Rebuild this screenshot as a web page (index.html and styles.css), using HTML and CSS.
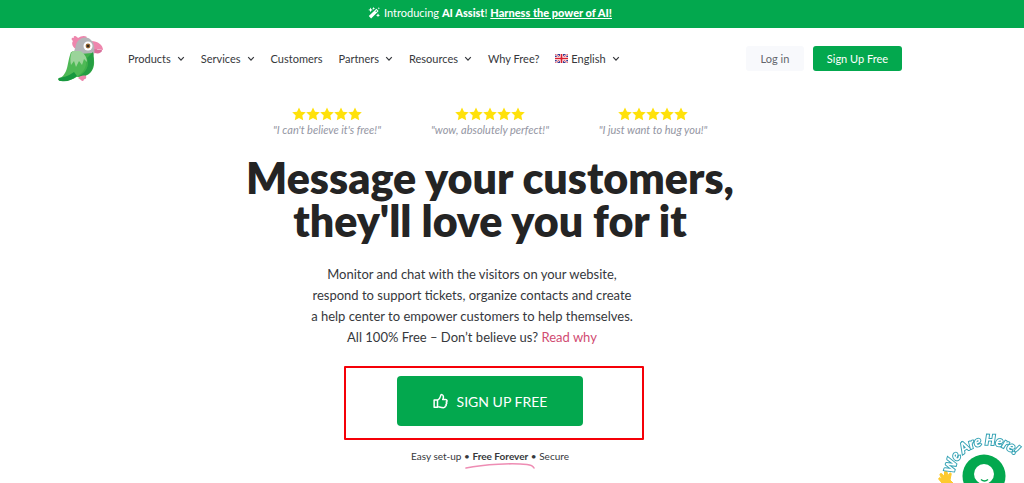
FILE: index.html
```html
<!DOCTYPE html>
<html lang="en">
<head>
<meta charset="utf-8">
<meta name="viewport" content="width=device-width, initial-scale=1">
<title>Message your customers</title>
<link rel="stylesheet" href="styles.css">
</head>
<body>
<svg class="defs" aria-hidden="true">
  <symbol id="star" viewBox="0 0 14 14"><path d="M7 .4l2 4.300 4.800.6-3.500 3.200.9 4.800L7 11l-4.200 2.300.9-4.800L.2 5.300 5 4.700z"/></symbol>
  <symbol id="chevron" viewBox="0 0 8 6"><path d="M1.200 1.200L4 4.200l2.800-3" fill="none" stroke="currentColor" stroke-width="1.200"/></symbol>
</svg>

<div class="promo">
  <svg class="promo-icon" viewBox="0 0 12 12" aria-hidden="true"><path d="M.8 9L8.400 1.800l2.200 2.300L3.100 11.400z"/><path d="M7.300 4.300l1.200-1.100.8.900-1.200 1z" fill="#03a84e"/><path d="M2.600.5l.7 1.700 1.700.7-1.700.7-.7 1.700-.7-1.700L.2 2.900l1.700-.7zM5.600 0l.5.9.9.5-.9.5-.5.900-.5-.9-.9-.5.9-.5zM10 6.300l.6 1.400 1.400.6-1.400.6-.6 1.400-.6-1.400-1.400-.6 1.400-.6zM10.900 0l.3.900.8.300-.8.400-.3.900-.4-.9-.9-.4.900-.3z"/></svg>
  <p>Introducing <b>AI Assist</b>! <a href="#ai">Harness the power of AI!</a></p>
</div>

<header class="header">
  <a class="logo" href="#home" aria-label="Home">
    <svg viewBox="0 0 46 48" aria-hidden="true">
      <path d="M20 3c-3-3-5-2-4 0-3-1-3 2-1 3-2 2 0 7 3 8l7-6 4-6c-3-2-6-1-9 1z" fill="#ee86ad"/>
      <path d="M33 6c7 0 12 4 12 9l-6-1c1 3-1 5-4 4l-3-4z" fill="#ee86ad"/>
      <path d="M35 14l9 1c0 3-4 4-7 3z" fill="#d96f9b"/>
      <path d="M18 10c2-7 10-10 15-5 3 3 4 8 3 14 0 4-8 5-13 4-6 0-10-2-10-3 3-2 4-6 5-10z" fill="#b3b5b7"/>
      <path d="M13 17c4 1 6-1 9 2l12-1c3 7 3 14-1 19-4 5-12 6-19 4z" fill="#3fb04b"/>
      <path d="M29 23c3 8-1 14-8 18 7 1 13-3 14-10 1-5 1-9 0-14z" fill="#259e43"/>
      <path d="M13 17c-3 8-3 15-5 19-2 4-4 7-7 7-2 1 0 3 2 3 9 0 13-2 18-6 6-4 8-10 7-17l-8-5z" fill="#4eb955"/>
      <path d="M1 43c7-1 11-3 15-6l3 4c-5 4-10 6-16 5-3 0-3-2-2-3z" fill="#18983f"/>
      <path d="M14 16c-2 5-2 10-1 14l3-4 2 6 3-6 3 4 2-6 3 3c0-5-3-9-7-11z" fill="#9bd49a"/>
      <circle cx="30" cy="11" r="4.500" fill="#fff"/><circle cx="30" cy="11" r="2.400" fill="#9b6a32"/><circle cx="30" cy="11" r="1.300" fill="#302a22"/>
      <path d="M20 43c2-2 5-3 8-2 1 2-1 4-2 3 0 2-2 3-3 1z" fill="#ee86ad"/>
    </svg>
  </a>
  <nav class="nav">
    <a href="#products">Products <svg class="chevron"><use href="#chevron"/></svg></a>
    <a href="#services">Services <svg class="chevron"><use href="#chevron"/></svg></a>
    <a href="#customers">Customers</a>
    <a href="#partners">Partners <svg class="chevron"><use href="#chevron"/></svg></a>
    <a href="#resources">Resources <svg class="chevron"><use href="#chevron"/></svg></a>
    <a href="#why">Why Free?</a>
    <a href="#language"><svg class="flag" viewBox="0 0 13 9" aria-hidden="true"><path d="M0 0h13v9H0z" fill="#343b93"/><path d="M0 0l13 9M13 0L0 9" stroke="#fff" stroke-width="2"/><path d="M0 0l13 9M13 0L0 9" stroke="#d93347" stroke-width=".8"/><path d="M6.500 0v9M0 4.500h13" stroke="#fff" stroke-width="3"/><path d="M6.500 0v9M0 4.500h13" stroke="#d9202f" stroke-width="1.700"/></svg>English <svg class="chevron"><use href="#chevron"/></svg></a>
  </nav>
  <div class="account">
    <button class="login" type="button">Log in</button>
    <button class="signup" type="button">Sign Up Free</button>
  </div>
</header>

<main class="hero">
  <div class="reviews">
    <figure class="review"><div class="stars"><svg><use href="#star"/></svg><svg><use href="#star"/></svg><svg><use href="#star"/></svg><svg><use href="#star"/></svg><svg><use href="#star"/></svg></div><figcaption>"I can't believe it's free!"</figcaption></figure>
    <figure class="review"><div class="stars"><svg><use href="#star"/></svg><svg><use href="#star"/></svg><svg><use href="#star"/></svg><svg><use href="#star"/></svg><svg><use href="#star"/></svg></div><figcaption>"wow, absolutely perfect!"</figcaption></figure>
    <figure class="review"><div class="stars"><svg><use href="#star"/></svg><svg><use href="#star"/></svg><svg><use href="#star"/></svg><svg><use href="#star"/></svg><svg><use href="#star"/></svg></div><figcaption>"I just want to hug you!"</figcaption></figure>
  </div>
  <h1>Message your customers,<br>they'll love you for it</h1>
  <p class="intro">Monitor and chat with the visitors on your website,<br>respond to support tickets, organize contacts and create<br>a help center to empower customers to help themselves.<br>All 100% Free – Don’t believe us? <a href="#read">Read why</a></p>
  <div class="cta">
    <button class="cta-button" type="button"><svg viewBox="0 0 16 16" aria-hidden="true"><path d="M1.200 7h3.600v7.600H1.200zM4.800 7.300C6.700 6.500 7.600 4.500 8 2.800 8.200 1.600 8.800 1 9.600 1.200c2 .5 1.700 3.300.8 5.300h3c2 0 2 2.200.7 2.600 1 .7.800 2-.3 2.400.6.900.2 1.800-.7 2.100 0 1.100-.7 1.500-2 1.500-2.800 0-4-.7-6.300-1.100" fill="none" stroke="currentColor" stroke-width="1.600" stroke-linejoin="round"/></svg>SIGN UP FREE</button>
  </div>
  <p class="perks">Easy set-up • <b>Free Forever</b> • Secure
    <svg class="swoosh" viewBox="0 0 70 8" aria-hidden="true"><path d="M1 6C20 2 48 1 62 2.500C66 3 68 4 69 6" fill="none" stroke="#ee8db4" stroke-width="1.600" stroke-linecap="round"/></svg>
  </p>
</main>

<button class="chat" type="button" aria-label="Open chat">
  <svg viewBox="0 0 86 52">
    <defs><path id="arc" d="M16 43C18 24 33 14 51 14C64 14 74 20 86 33"/></defs>
    <circle cx="46" cy="45" r="21.500" fill="#03a84e"/>
    <circle cx="46" cy="43" r="10" fill="#fff"/>
    <path d="M43 48.500q3.500 3 7 0" fill="none" stroke="#03a84e" stroke-width="1.500"/>
    <path d="M4 52L1 48.500c-1-2 1-2 2-1l1 .5-2-4c-.5-2 2-2 3 0l1.500 2V41c.5-2 2.500-1 2.500 0l1 4 1-2c1-2 3-1 2 1l-1 5 3 3z" fill="#fdca2e" stroke="#fdca2e"/>
    <text class="chat-label"><textPath href="#arc">We Are Here!</textPath></text>
  </svg>
</button>
</body>
</html>
```
FILE: styles.css
```css
*, *::after { box-sizing: border-box; }
body {
  margin: 0;
  min-height: 100vh;
  background: #fff;
  color: #36383c;
  font-family: Lato, "Liberation Sans", sans-serif;
  font-size: 11px;
}
p, h1, figure { margin: 0; }
button { border: 0; padding: 0; font: inherit; cursor: pointer; }
a { color: inherit; text-decoration: none; }
.defs { position: absolute; width: 0; height: 0; }

.promo {
  display: flex;
  align-items: center;
  justify-content: center;
  gap: 4px;
  height: 28px;
  padding: 0 44px 3px 0;
  background: #03a84e;
  color: #fff;
}
.promo b, .promo a { font-weight: 900; }
.promo a { text-decoration: underline; }
.promo-icon { width: 12px; height: 12px; fill: #fff; }

.header {
  display: flex;
  align-items: center;
  height: 61px;
  padding: 0 122px 0 58px;
}
.logo { display: block; width: 46px; height: 48px; }
.logo svg { display: block; width: 100%; height: 100%; }
.nav { display: flex; gap: 16px; margin-left: 24px; }
.nav a { display: flex; align-items: center; white-space: nowrap; }
.chevron { width: 8px; height: 6px; margin-left: 6px; }
.flag { width: 13px; height: 9px; margin-right: 3px; }
.account { display: flex; gap: 9px; margin-left: auto; }
.account button { height: 25px; border-radius: 3px; }
.account .login { width: 58px; background: #f8f9fc; color: #63666c; }
.account .signup { width: 89px; background: #03a84e; color: #fff; }

.hero { padding: 18px 44px 0 0; text-align: center; }
.reviews { display: flex; justify-content: center; }
.review { width: 163px; }
.stars { display: flex; justify-content: center; height: 14px; }
.stars svg { width: 14px; height: 14px; fill: #ffe10a; }
.review figcaption {
  color: #9496a3;
  font-style: italic;
  line-height: 18px;
}
h1 {
  margin-top: 17px;
  color: #242424;
  font-size: 43px;
  font-weight: 800;
  line-height: 43px;
}
.intro {
  margin-top: 22px;
  padding-right: 36px;
  font-size: 13px;
  line-height: 21px;
}
.intro a { color: #d14b72; }
.cta { position: relative; margin-top: 28px; }
.cta::after {
  content: "";
  position: absolute;
  top: -10px;
  left: calc(50% - 146px);
  width: 300px;
  height: 74px;
  border: 2px solid #f50008;
  border-radius: 1px;
  pointer-events: none;
}
.cta-button {
  display: inline-flex;
  align-items: center;
  justify-content: center;
  gap: 9px;
  width: 186px;
  height: 50px;
  border-radius: 4px;
  background: #03a84e;
  color: #fff;
  font-size: 14px;
}
.cta-button svg { width: 15px; height: 16px; }
.perks { position: relative; margin-top: 22px; font-size: 10px; line-height: 16px; }
.swoosh {
  position: absolute;
  top: 14px;
  left: calc(50% - 25px);
  width: 70px;
  height: 8px;
}

.chat {
  position: fixed;
  right: 0;
  bottom: 0;
  width: 86px;
  height: 52px;
  background: none;
}
.chat svg { display: block; width: 100%; height: 100%; }
.chat-label {
  fill: #fff;
  stroke: #36a3b5;
  stroke-width: 2px;
  paint-order: stroke;
  font-size: 14px;
  font-style: italic;
  font-weight: 900;
}
```
